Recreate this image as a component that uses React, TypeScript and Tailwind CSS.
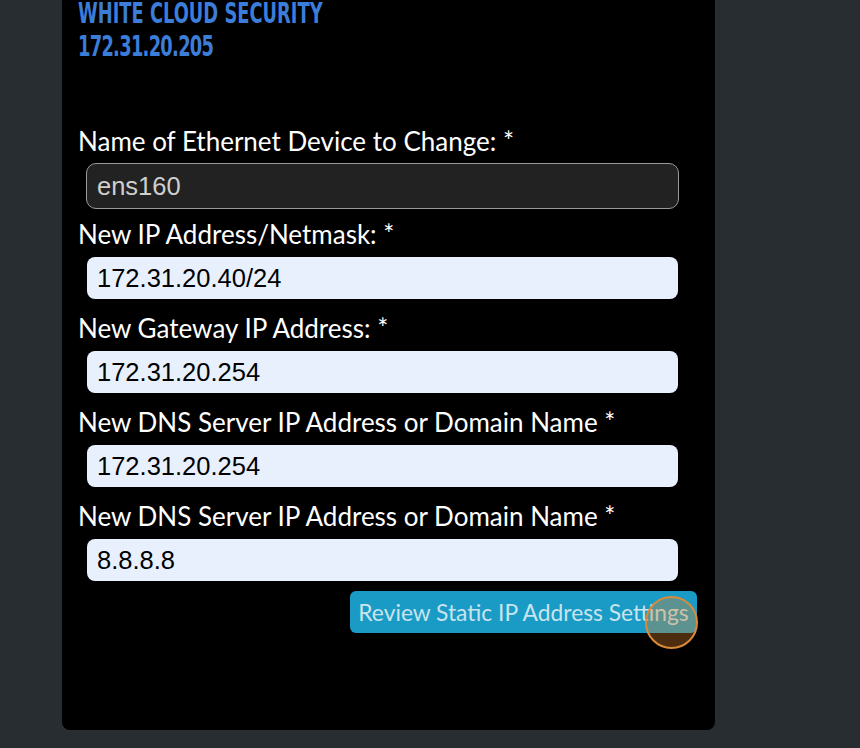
import React from 'react';

type Field = {
  id: string;
  label: string;
  value: string;
};

const FIELDS: Field[] = [
  { id: 'ip', label: 'New IP Address/Netmask: *', value: '172.31.20.40/24' },
  { id: 'gw', label: 'New Gateway IP Address: *', value: '172.31.20.254' },
  { id: 'dns1', label: 'New DNS Server IP Address or Domain Name *', value: '172.31.20.254' },
  { id: 'dns2', label: 'New DNS Server IP Address or Domain Name *', value: '8.8.8.8' },
];

const App = () => {
  return (
    <div className="relative w-full h-[748px] bg-[#282d31] overflow-hidden pl-[62px]">
      <div className="flow-root w-[653px] h-[730px] bg-black rounded-b-lg pl-4">
        {/* header */}
        <div className="origin-left scale-x-[0.722] w-[500px] font-['DejaVu_Sans_Condensed',sans-serif] font-bold text-[27.5px] leading-[27px] text-[#3b7dd8]">
          <div>WHITE CLOUD SECURITY</div>
          <div className="mt-[6px] tracking-[-1px]">172.31.20.205</div>
        </div>

        <form className="flex flex-col mt-[67px] font-['Lato',sans-serif]">
          <label htmlFor="device" className="block h-[28px] text-[26px] leading-[28px] text-white whitespace-nowrap">
            Name of Ethernet Device to Change: *
          </label>
          <input
            id="device"
            readOnly
            defaultValue="ens160"
            className="mt-[8px] ml-[8px] w-[593px] h-[46px] rounded-[10px] border border-[#9a9a9a] bg-[#222222] px-[10px] font-['Liberation_Sans',Arial,sans-serif] text-[25.5px] text-[#cfcfcf] outline-none"
          />
          {FIELDS.map((f, i) => (
            <React.Fragment key={f.id}>
              <label
                htmlFor={f.id}
                className={`block h-[28px] text-[26px] leading-[28px] text-white whitespace-nowrap ${i === 0 ? 'mt-[11px]' : 'mt-[15px]'}`}
              >
                {f.label}
              </label>
              <input
                id={f.id}
                readOnly
                defaultValue={f.value}
                className="mt-[9px] ml-[9px] w-[591px] h-[42px] rounded-[8px] bg-[#e8f0fe] px-[10px] font-['Liberation_Sans',Arial,sans-serif] text-[25.5px] text-black outline-none"
              />
            </React.Fragment>
          ))}
          <div className="flex justify-end mt-[10px] mr-[18px]">
            <button
              type="button"
              className="w-[347px] h-[42px] rounded-[6px] bg-[#1a9bc5] text-[22.8px] text-[#c9e4ee] whitespace-nowrap"
            >
              Review Static IP Address Settings
            </button>
          </div>
        </form>
      </div>

      {/* click marker */}
      <div className="absolute left-[645px] top-[596px] w-[53px] h-[53px] rounded-full border-2 border-[#d98a3a] bg-[#d9822b]/35" />
    </div>
  );
};

export default App;
